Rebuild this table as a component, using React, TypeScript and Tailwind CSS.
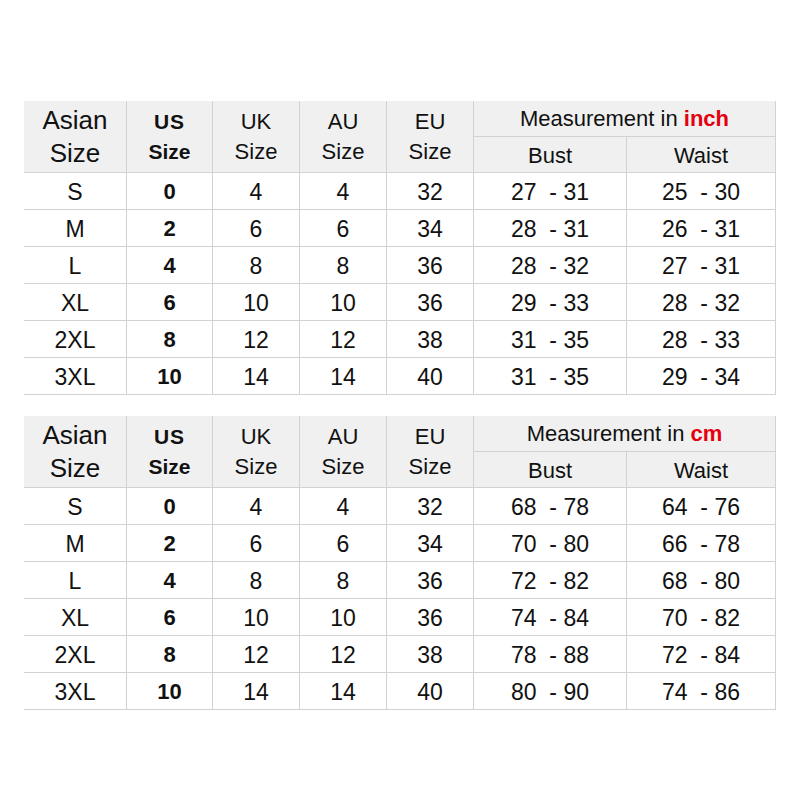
import React from 'react';

type Row = [string, string, string, string, string, string, string];

const inchRows: Row[] = [
  ['S', '0', '4', '4', '32', '27  - 31', '25  - 30'],
  ['M', '2', '6', '6', '34', '28  - 31', '26  - 31'],
  ['L', '4', '8', '8', '36', '28  - 32', '27  - 31'],
  ['XL', '6', '10', '10', '36', '29  - 33', '28  - 32'],
  ['2XL', '8', '12', '12', '38', '31  - 35', '28  - 33'],
  ['3XL', '10', '14', '14', '40', '31  - 35', '29  - 34'],
];

const cmRows: Row[] = [
  ['S', '0', '4', '4', '32', '68  - 78', '64  - 76'],
  ['M', '2', '6', '6', '34', '70  - 80', '66  - 78'],
  ['L', '4', '8', '8', '36', '72  - 82', '68  - 80'],
  ['XL', '6', '10', '10', '36', '74  - 84', '70  - 82'],
  ['2XL', '8', '12', '12', '38', '78  - 88', '72  - 84'],
  ['3XL', '10', '14', '14', '40', '80  - 90', '74  - 86'],
];

const head =
  'bg-[#f0f0f0] border-b border-r border-[#d2d2d2] flex flex-col items-center justify-center text-center';
const cell =
  'border-b border-r border-[#d2d2d2] flex items-center justify-center whitespace-pre pt-[2px] text-[23px]';
const boldCell =
  'border-b border-r border-[#d2d2d2] flex items-center justify-center pt-[1px] text-[22px] font-bold';

function SizeTable({ unit, rows }: { unit: string; rows: Row[] }) {
  return (
    <div className="grid grid-cols-[103px_86px_87px_87px_87px_153px_149px] grid-rows-[36px_36px_repeat(6,37px)] text-[#111]">
      {/* header */}
      <div className={`${head} row-span-2 text-[26px] leading-[33px] pt-[1px]`}>
        <span>Asian</span>
        <span>Size</span>
      </div>
      <div className={`${head} row-span-2 text-[21px] font-bold leading-[30px]`}>
        <span className="tracking-[1px]">US</span>
        <span>Size</span>
      </div>
      {['UK', 'AU', 'EU'].map((c) => (
        <div key={c} className={`${head} row-span-2 text-[22px] leading-[30px]`}>
          <span>{c}</span>
          <span>Size</span>
        </div>
      ))}
      <div className={`${head} col-span-2 text-[22px]`}>
        <span>
          Measurement in <b className="text-[#e5000f]">{unit}</b>
        </span>
      </div>
      <div className={`${head} text-[22px] pt-[2px]`}>Bust</div>
      <div className={`${head} text-[22px] pt-[2px]`}>Waist</div>

      {/* body */}
      {rows.map((r) =>
        r.map((v, i) => (
          <div key={r[0] + i} className={i === 1 ? boldCell : cell}>
            {v}
          </div>
        ))
      )}
    </div>
  );
}

export default function App() {
  return (
    <div
      className="w-[800px] h-[800px] bg-white pt-[101px] pl-[24px] flex flex-col gap-[21px]"
      style={{ fontFamily: '"Liberation Sans", Arial, sans-serif' }}
    >
      <SizeTable unit="inch" rows={inchRows} />
      <SizeTable unit="cm" rows={cmRows} />
    </div>
  );
}
